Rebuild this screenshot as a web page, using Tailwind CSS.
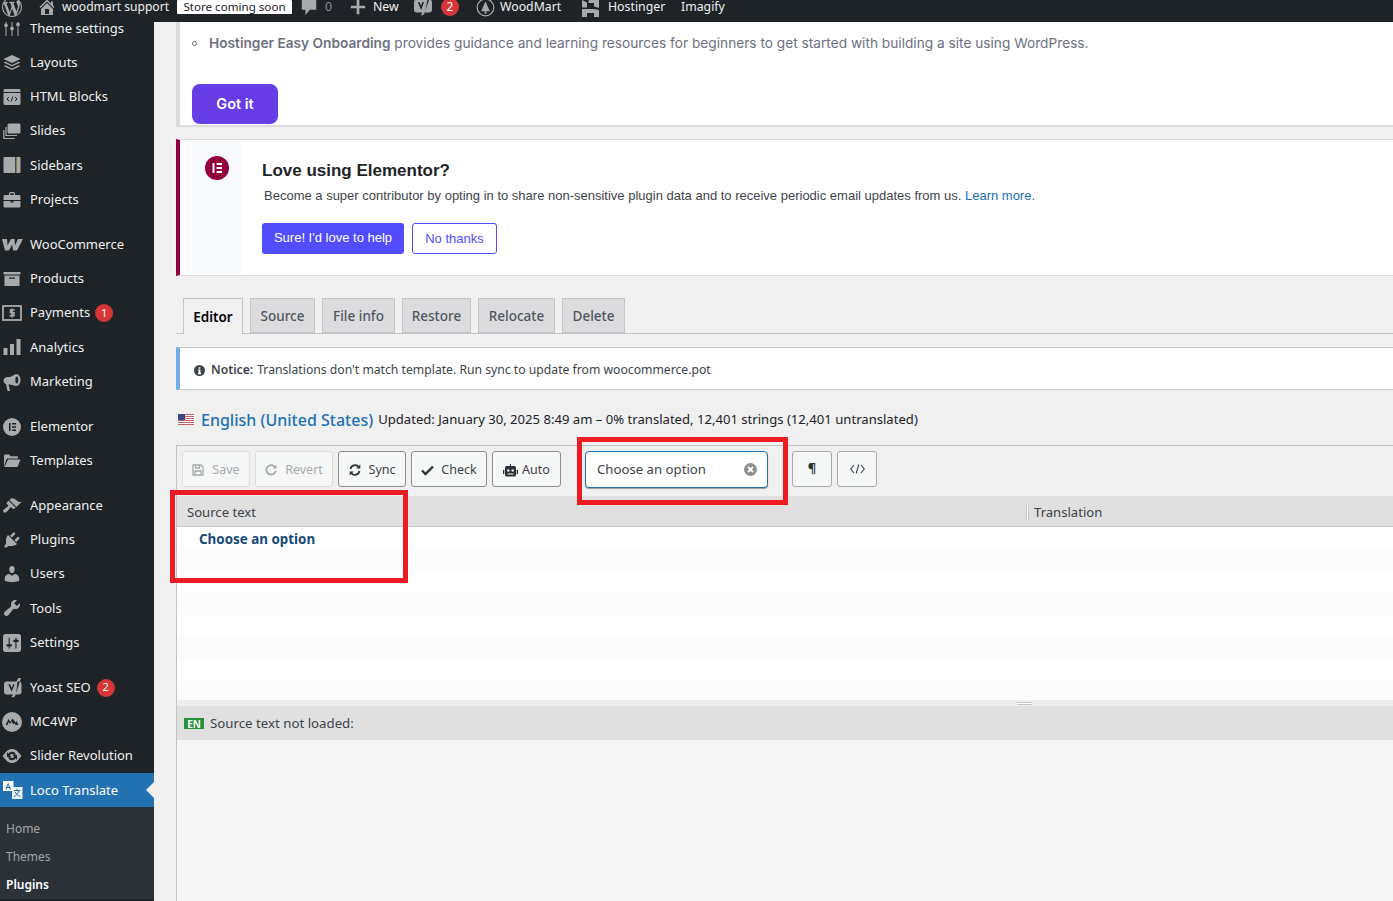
<!DOCTYPE html>
<html lang="en"><head><meta charset="utf-8"><title>Loco Translate</title>
<script src="https://cdn.jsdelivr.net/npm/@tailwindcss/browser@4"></script></head>
<body class="h-[901px] w-[1393px] overflow-hidden bg-[#f0f0f1] font-['Noto_Sans',sans-serif] text-[13.1px] text-[#3c434a]">
<header class="relative z-10 h-[22px] overflow-hidden bg-[#1d2327] text-[12.3px] leading-none text-[#f0f0f1]">
 <div class="-mt-[7px] flex h-[28px] items-center">
  <svg class="ml-[2px] h-[20px] w-[20px] shrink-0 text-[#a7aaad]" viewBox="0 0 20 20" fill="currentColor"><path d="M20 10c0-5.51-4.49-10-10-10C4.48 0 0 4.49 0 10c0 5.52 4.48 10 10 10 5.51 0 10-4.48 10-10zM7.78 15.37L4.37 6.22c.55-.02 1.17-.08 1.17-.08.5-.06.44-1.13-.06-1.11 0 0-1.45.11-2.37.11-.18 0-.37 0-.58-.01C4.12 2.69 6.87 1.11 10 1.11c2.33 0 4.45.87 6.05 2.34-.68-.11-1.65.39-1.65 1.58 0 .74.45 1.36.9 2.1.35.61.55 1.36.55 2.46 0 1.49-1.4 5-1.4 5l-3.03-8.37c.54-.02.82-.17.82-.17.5-.05.44-1.25-.06-1.22 0 0-1.44.12-2.38.12-.87 0-2.33-.12-2.33-.12-.5-.03-.56 1.2-.06 1.22l.92.08 1.26 3.41zM17.41 10c.24-.64.74-1.87.43-4.25.7 1.29 1.05 2.71 1.05 4.25 0 3.29-1.73 6.24-4.4 7.78.97-2.59 1.94-5.2 2.92-7.78zM6.1 18.09C3.12 16.65 1.11 13.53 1.11 10c0-1.3.23-2.48.72-3.59C3.25 10.3 4.67 14.2 6.1 18.09zm4.03-6.63l2.58 6.98c-.86.29-1.76.45-2.71.45-.79 0-1.57-.11-2.29-.33.81-2.38 1.62-4.74 2.42-7.1z"/></svg>
  <svg class="ml-[15px] h-[20px] w-[20px] shrink-0 text-[#a7aaad]" viewBox="0 0 20 20" fill="currentColor"><path d="M16 8.5l1.53 1.53-1.06 1.06L10 4.62l-6.47 6.47-1.06-1.06L10 2.5l4 4v-2h2v4zm-6-2.46l6 5.99V18H4v-5.97zM12 17v-5H8v5h4z"/></svg>
  <span class="ml-[5px] w-[108px] whitespace-nowrap text-[12.1px]">woodmart support</span>
  <span class="ml-[7px] flex h-[14px] w-[115px] shrink-0 items-center justify-center rounded-[1px] bg-white text-[11.6px] whitespace-nowrap text-[#1d2327]">Store coming soon</span>
  <svg class="ml-[8px] h-[18px] w-[18px] shrink-0 text-[#a7aaad]" viewBox="0 0 20 20" fill="currentColor"><path d="M2 1h16v12h-7l-5 6v-6H2z"/></svg>
  <span class="ml-[7px] w-[8px] text-[#8c8f94]">0</span>
  <svg class="ml-[16px] h-[18px] w-[18px] shrink-0 text-[#a7aaad]" viewBox="0 0 20 20" fill="currentColor"><path d="M18 8.500v3h-6.500V18h-3v-6.500H2v-3h6.500V2h3v6.500z"/></svg>
  <span class="ml-[6px] w-[26px]">New</span>
  <svg class="ml-[15px] h-[20px] w-[18px] shrink-0 text-[#a7aaad]" viewBox="0 0 18 20" fill="currentColor"><path d="M2.500 2.500h9L12.500 0H16l-5.500 16c-.5 1.500-1.500 2.300-3 2.500l-.5-1.500c1-.3 1.300-.7 1.500-1.500h-6C1.200 15.500 0 14.500 0 13V5c0-1.500 1.200-2.500 2.500-2.500zm1.300 2.700L7.200 13 10 5.200H8.200L7 9 5.700 5.200zM13.500 2.500H15c1.700 0 3 1 3 2.500v8c0 1.500-1.300 2.500-3 2.500h-4z" fill-rule="evenodd"/></svg>
  <span class="ml-[9px] flex h-[18px] w-[18px] shrink-0 items-center justify-center rounded-full bg-[#d63638] text-[12px] text-white">2</span>
  <svg class="ml-[17px] h-[19px] w-[19px] shrink-0 text-[#a7aaad]" viewBox="0 0 20 20" fill="none" stroke="currentColor" stroke-width="1.300"><circle cx="10" cy="10" r="8.800"/><path d="M10 3.500L14.500 14h-9z" fill="currentColor" stroke="none"/><path d="M9 14h2v2.500H9z" fill="currentColor" stroke="none"/></svg>
  <span class="ml-[5px] w-[63px]">WoodMart</span>
  <svg class="ml-[18px] h-[20px] w-[20px] shrink-0 text-[#a7aaad]" viewBox="0 0 20 20" fill="currentColor"><path d="M1 3l5 2.500v5H1zM1 12h12l5 1v8h-5v-5H6v5H1zM13 1l5-1.500V11l-5-1.500V6H7.500V3.500z"/></svg>
  <span class="ml-[7px] w-[56px]">Hostinger</span>
  <span class="ml-[17px]">Imagify</span>
 </div>
</header>
<div class="flex h-[879px]">
<aside class="h-full w-[154px] shrink-0 overflow-hidden bg-[#1d2327] text-[13px] text-[#f0f0f1]">
  <div class="-mt-[10.75px]">
    <a class="flex h-[34.25px] items-center"><svg class="ml-[3px] mr-[9px] h-[18px] w-[18px] shrink-0 text-[#a7aaad]" viewBox="0 0 18 18" fill="currentColor"><path d="M2.500 1h1v3.500a2 2 0 0 1 1.300 1.900 2 2 0 0 1-1.300 1.900V17h-1V8.300A2 2 0 0 1 1.200 6.400 2 2 0 0 1 2.500 4.500zM8.500 1h1v6.500a2 2 0 0 1 0 3.800V17h-1v-5.700a2 2 0 0 1 0-3.800zM14.500 1h1v2.500a2 2 0 0 1 0 3.800V17h-1V7.300a2 2 0 0 1 0-3.800z"/></svg>Theme settings</a>
    <a class="flex h-[34.25px] items-center"><svg class="ml-[3px] mr-[9px] h-[18px] w-[18px] shrink-0 text-[#a7aaad]" viewBox="0 0 18 18" fill="currentColor"><path d="M9 1l8.500 4-8.500 4-8.500-4zM2.500 7.700L9 11l6.500-3.300L17.500 8.500 9 12.500.5 8.500zM2.500 11.200L9 14.500l6.500-3.300L17.500 12 9 16 .5 12z"/></svg>Layouts</a>
    <a class="flex h-[34.25px] items-center"><svg class="ml-[3px] mr-[9px] h-[18px] w-[18px] shrink-0 text-[#a7aaad]" viewBox="0 0 18 18" fill="currentColor"><path d="M2 1h14a1.500 1.500 0 0 1 1.500 1.500V4H.5V2.500A1.500 1.500 0 0 1 2 1zM.5 5h17v10.500A1.500 1.500 0 0 1 16 17H2a1.500 1.500 0 0 1-1.500-1.500z"/><path d="M6 9l-2 2 2 2M12 9l2 2-2 2M10 8.500l-2 5" fill="none" stroke="#1d2327" stroke-width="1"/></svg>HTML Blocks</a>
    <a class="flex h-[34.25px] items-center"><svg class="ml-[3px] mr-[9px] h-[18px] w-[18px] shrink-0 text-[#a7aaad]" viewBox="0 0 18 18" fill="currentColor"><path d="M6 1.500h10A1.500 1.500 0 0 1 17.500 3v7A1.500 1.500 0 0 1 16 11.500H6A1.500 1.500 0 0 1 4.500 10V3A1.500 1.500 0 0 1 6 1.500z"/><path d="M3 5v8.500h11M.8 8v8.500h11" fill="none" stroke="currentColor" stroke-width="1.200"/></svg>Slides</a>
    <a class="flex h-[34.25px] items-center"><svg class="ml-[3px] mr-[9px] h-[18px] w-[18px] shrink-0 text-[#a7aaad]" viewBox="0 0 18 18" fill="currentColor"><path d="M1.500 1H12v16H1.500a1 1 0 0 1-1-1V2a1 1 0 0 1 1-1zM14 1h2.500a1 1 0 0 1 1 1v14a1 1 0 0 1-1 1H14z"/><path d="M12.500 1H14v16h-1.500z" fill="#8c7a3c"/></svg>Sidebars</a>
    <a class="flex h-[34.25px] items-center"><svg class="ml-[3px] mr-[9px] h-[18px] w-[18px] shrink-0 text-[#a7aaad]" viewBox="0 0 18 18" fill="currentColor"><path d="M6 4V2.500A1.500 1.500 0 0 1 7.500 1h3A1.500 1.500 0 0 1 12 2.500V4h4.500a1 1 0 0 1 1 1v4H.5V5a1 1 0 0 1 1-1zm1.300 0h3.400V2.300H7.300zM.5 10h7v1.500h3V10h7v5.500a1 1 0 0 1-1 1h-15a1 1 0 0 1-1-1z"/></svg>Projects</a>
    <div class="h-[10.7px]"></div>
    <a class="flex h-[34.25px] items-center"><svg class="ml-[2px] mr-[7px] h-[21px] w-[21px] shrink-0 text-[#a7aaad]" viewBox="0 0 21 21" fill="currentColor"><path d="M0 5h5l.5 6.500L9 5h3.500l.5 6.500L16 5h5l-6 11.500h-4l-.8-6-3.200 6H3z"/></svg>WooCommerce</a>
    <a class="flex h-[34.25px] items-center"><svg class="ml-[3px] mr-[9px] h-[18px] w-[18px] shrink-0 text-[#a7aaad]" viewBox="0 0 18 18" fill="currentColor"><path d="M.5 2h17v2.500H.5zM1.500 5.500h15V16h-15zM6 7.500v1.200h6V7.500z" fill-rule="evenodd"/></svg>Products</a>
    <a class="flex h-[34.25px] items-center"><svg class="ml-[2px] mr-[8px] h-[20px] w-[20px] shrink-0 text-[#a7aaad]" viewBox="0 0 20 20"><rect x="1" y="3" width="18" height="14" fill="none" stroke="currentColor" stroke-width="1.800"/><path d="M12.800 7h-4.300v2.800h3.500v3H7.500M10 5.500v9" fill="none" stroke="currentColor" stroke-width="1.600"/></svg>Payments<span class="ml-[5px] flex h-[18px] w-[18px] items-center justify-center rounded-full bg-[#d63638] text-[11px] text-white">1</span></a>
    <a class="flex h-[34.25px] items-center"><svg class="ml-[3px] mr-[9px] h-[18px] w-[18px] shrink-0 text-[#a7aaad]" viewBox="0 0 18 18" fill="currentColor"><path d="M.5 10h4v7h-4zM7 6h4v11H7zM13.500 1h4v16h-4z"/></svg>Analytics</a>
    <a class="flex h-[34.25px] items-center"><svg class="ml-[3px] mr-[7px] h-[20px] w-[20px] shrink-0 text-[#a7aaad]" viewBox="0 0 20 20" fill="currentColor"><path d="M13 2c3 0 4.500 3 4.500 6S16 14 13 14L7 12.500H5.500L7 19H4.500L3 12.200C1.500 11.500.5 10.200.5 8.500c0-2 2-3.500 4-3.500H7zm.8 2.500c-1 0-1.500 1.700-1.500 3.500s.5 3.500 1.500 3.500 1.500-1.700 1.500-3.500-.5-3.500-1.500-3.500z" fill-rule="evenodd"/></svg>Marketing</a>
    <div class="h-[10.7px]"></div>
    <a class="flex h-[34.25px] items-center"><svg class="ml-[3px] mr-[9px] h-[18px] w-[18px] shrink-0 text-[#a7aaad]" viewBox="0 0 18 18"><circle cx="9" cy="9" r="9" fill="currentColor"/><path d="M6 5h1.500v8H6zM9 5h4v1.500H9zM9 8.250h4v1.500H9zM9 11.500h4V13H9z" fill="#1d2327"/></svg>Elementor</a>
    <a class="flex h-[34.25px] items-center"><svg class="ml-[3px] mr-[9px] h-[18px] w-[18px] shrink-0 text-[#a7aaad]" viewBox="0 0 18 18" fill="currentColor"><path d="M1 15V3.500A1 1 0 0 1 2 2.500h4l1.500 1.800H14a1 1 0 0 1 1 1v1.200H5c-1 0-1.500.5-1.800 1.200z"/><path d="M5 7.500h12.500L14.500 15H1.500z"/></svg>Templates</a>
    <div class="h-[10.7px]"></div>
    <a class="flex h-[34.25px] items-center"><svg class="ml-[2px] mr-[8px] h-[20px] w-[20px] shrink-0 text-[#a7aaad]" viewBox="0 0 20 20" fill="currentColor"><path d="M14.480 11.060L7.410 3.990l1.500-1.500c.5-.56 2.300-.47 3.510.32 1.210.8 1.430 1.280 2.910 2.100 1.180.64 2.450 1.260 4.450.85zm-.710.710L6.700 4.700 4.930 6.470c-.39.39-.39 1.020 0 1.410l1.060 1.060c.39.39.39 1.030 0 1.420-.6.6-1.430 1.110-2.210 1.690-.35.26-.7.530-1.010.84C1.430 13.230.4 14.910 1.560 16.070c1.500 1.500 2.840.13 4.180-1.220.31-.31.58-.66.840-1.010.58-.78 1.090-1.610 1.690-2.210.39-.39 1.030-.39 1.420 0l1.060 1.060c.39.39 1.020.39 1.410 0z"/></svg>Appearance</a>
    <a class="flex h-[34.25px] items-center"><svg class="ml-[2px] mr-[8px] h-[20px] w-[20px] shrink-0 text-[#a7aaad]" viewBox="0 0 20 20" fill="currentColor"><path d="M13.110 4.360L9.870 7.600 8 5.730l3.240-3.240c.35-.34 1.050-.2 1.560.32.52.51.66 1.210.31 1.550zm-8 1.770l.91-1.120 9.010 9.010-1.190.84c-.71.71-2.630 1.160-3.820 1.160H6.140L4.900 17.260c-.59.590-1.540.590-2.120 0-.59-.58-.59-1.530 0-2.120l1.240-1.240v-3.880c0-1.130.4-3.190 1.090-3.890zm7.260 3.970l3.240-3.240c.34-.35 1.040-.21 1.550.31.520.51.660 1.210.31 1.550l-3.240 3.250z"/></svg>Plugins</a>
    <a class="flex h-[34.25px] items-center"><svg class="ml-[2px] mr-[8px] h-[20px] w-[20px] shrink-0 text-[#a7aaad]" viewBox="0 0 20 20" fill="currentColor"><path d="M10 9.250c-2.270 0-2.730-3.440-2.730-3.440C7 4.020 7.820 2 9.970 2c2.160 0 2.980 2.020 2.710 3.810 0 0-.41 3.440-2.680 3.440zm0 2.570L12.720 10c2.390 0 4.520 2.330 4.520 4.530v2.490s-3.650 1.130-7.240 1.130c-3.650 0-7.240-1.130-7.240-1.130v-2.490c0-2.250 1.940-4.480 4.470-4.480z"/></svg>Users</a>
    <a class="flex h-[34.25px] items-center"><svg class="ml-[2px] mr-[8px] h-[20px] w-[20px] shrink-0 text-[#a7aaad]" viewBox="0 0 20 20" fill="currentColor"><path d="M16.680 9.770c-1.340 1.340-3.300 1.670-4.950.99l-5.410 6.520c-.99.990-2.590.990-3.580 0s-.99-2.590 0-3.570l6.520-5.420c-.68-1.650-.35-3.610.99-4.950 1.280-1.280 3.120-1.620 4.720-1.060l-2.890 2.890 2.820 2.820 2.860-2.870c.53 1.580.18 3.390-1.080 4.650z"/></svg>Tools</a>
    <a class="flex h-[34.25px] items-center"><svg class="ml-[3px] mr-[9px] h-[18px] w-[18px] shrink-0 text-[#a7aaad]" viewBox="2 2 16 16" fill="currentColor"><path d="M18 16V4c0-1.100-.9-2-2-2H4c-1.100 0-2 .9-2 2v12c0 1.100.9 2 2 2h12c1.100 0 2-.9 2-2zM8 11h1c.55 0 1 .45 1 1s-.45 1-1 1H8v1.500c0 .28-.22.5-.5.5s-.5-.22-.5-.5V13H6c-.55 0-1-.45-1-1s.45-1 1-1h1V5.500c0-.28.22-.5.5-.5s.5.22.5.5V11zm5-2h-1c-.55 0-1-.45-1-1s.45-1 1-1h1V5.500c0-.28.22-.5.5-.5s.5.22.5.5V7h1c.55 0 1 .45 1 1s-.45 1-1 1h-1v5.500c0 .28-.22.5-.5.5s-.5-.22-.5-.5V9z"/></svg>Settings</a>
    <div class="h-[10.7px]"></div>
    <a class="flex h-[34.25px] items-center"><svg class="ml-[3px] mr-[7px] h-[20px] w-[20px] shrink-0 text-[#a7aaad]" viewBox="0 0 20 20" fill="currentColor"><path d="M3.500 3.500h9.800L15.500 0H18l-5.500 17c-.5 1.500-1.500 2.300-3 2.500L8.500 18c1-.3 1.500-.7 1.800-1.500H3.500C2 16.500 1 15.500 1 14V6c0-1.500 1-2.500 2.500-2.500zm1.800 2.700l3.400 7.600 2.800-7.600H10L8.700 10 7 6.200zM14.500 3.500h2c1 0 2 1 2 2.500v8c0 1.500-1 2.500-2.500 2.500h-3z" fill-rule="evenodd"/></svg>Yoast SEO<span class="ml-[6px] flex h-[18px] w-[18px] items-center justify-center rounded-full bg-[#d63638] text-[11px] text-white">2</span></a>
    <a class="flex h-[34.25px] items-center"><svg class="ml-[2px] mr-[8px] h-[20px] w-[20px] shrink-0 text-[#a7aaad]" viewBox="0 0 20 20"><circle cx="10" cy="10" r="10" fill="currentColor"/><path d="M3.500 13l3-6 2 3 2-3.500 3 4 1-1.500 2 4h-3l-1-2-1 1.500-2-3-1.500 2.500-1.500-2-1 3z" fill="#1d2327"/></svg>MC4WP</a>
    <a class="flex h-[34.25px] items-center"><svg class="ml-[2px] mr-[8px] h-[20px] w-[20px] shrink-0 text-[#a7aaad]" viewBox="0 0 20 20" fill="currentColor"><path d="M10 3c3 0 5.500 1.800 7 4l2.500 3L17 13c-1.500 2.200-4 4-7 4s-5.500-1.800-7-4L.5 10 3 7c1.500-2.200 4-4 7-4z"/><path d="M14 8.500a4.300 4.300 0 0 0-7.500-1L5 6.300V11h4.500L7.800 9.300A2.500 2.500 0 0 1 12 9zM6 11.500a4.300 4.300 0 0 0 7.500 1l1.500 1.200V9h-4.500l1.700 1.700A2.500 2.500 0 0 1 8 11z" fill="#1d2327"/></svg>Slider Revolution</a>
    <a class="relative flex h-[34px] items-center bg-[#2271b1] text-white"><svg class="ml-[2px] mr-[7px] h-[20px] w-[21px] shrink-0" viewBox="0 0 21 20"><path d="M1 1h10.500v10H1z" fill="#fff"/><path d="M6.200 2.500l3 7H8l-.6-1.500H5l-.6 1.500H3.200zm0 2.200L5.400 7h1.600z" fill="#2271b1" fill-rule="evenodd"/><path d="M10 7h10.500v12H10z" fill="#eef3f8"/><path d="M12 10.500h6.500M15.200 9v1.500M17 10.500c-.5 2.500-2.500 5-5 6M13.300 12c.7 2 2.700 3.700 5 4.500" fill="none" stroke="#2271b1" stroke-width="1"/></svg>Loco Translate<span class="absolute right-0 h-0 w-0 border-y-[8px] border-r-[8px] border-y-transparent border-r-[#f0f0f1]"></span></a>
    <div class="bg-[#2c3338] pt-[7.500px] text-[12px] text-[#c3c4c7]/80">
      <a class="flex h-[28px] items-center pl-[6px]">Home</a>
      <a class="flex h-[28px] items-center pl-[6px]">Themes</a>
      <a class="flex h-[28px] items-center pl-[6px] font-semibold text-white">Plugins</a>
    </div>
  </div>
</aside>
<main class="relative min-w-0 flex-1 overflow-hidden pl-[22px]">
  <section class="flex h-[105px] flex-col border-b-2 border-l-4 border-[#dcdcde] bg-white pl-[12px] font-['Inter',sans-serif] text-[13.7px] text-[#6d7081]">
    <p class="mt-[11px] flex items-center whitespace-nowrap"><span class="mr-[12px] h-[5px] w-[5px] rounded-full border border-[#6d7081]"></span><span><b class="font-semibold">Hostinger Easy Onboarding</b> provides guidance and learning resources for beginners to get started with building a site using WordPress.</span></p>
    <button class="mt-[30px] flex h-[40px] w-[86px] items-center justify-center rounded-[8px] bg-[#673de6] text-[14.500px] font-semibold text-white">Got it</button>
  </section>
  <section class="mt-[12px] flex h-[137px] border-y border-[#dcdcde] border-l-4 border-l-[#93003f] bg-white py-[1px] pl-[12px] font-['Liberation_Sans',sans-serif] text-[#3f444b]">
    <div class="flex w-[50px] shrink-0 justify-center bg-[#f9faff] pt-[15px]">
      <svg class="h-[24px] w-[24px]" viewBox="0 0 24 24"><circle cx="12" cy="12" r="12" fill="#93003f"/><path d="M7.500 7h2v10h-2zM11.500 7h5.500v2h-5.500zM11.500 11h5.500v2h-5.500zM11.500 15h5.500v2h-5.500z" fill="#fff"/></svg>
    </div>
    <div class="pl-[20px]">
      <h2 class="mt-[20px] text-[17px] font-bold leading-[20px] text-[#1d2327]">Love using Elementor?</h2>
      <p class="ml-[2px] mt-[7px] whitespace-nowrap text-[13px] leading-[16px]">Become a super contributor by opting in to share non-sensitive plugin data and to receive periodic email updates from us. <span class="text-[#2271b1]">Learn more.</span></p>
      <div class="mt-[19px] flex gap-[8px] text-[13px]">
        <button class="h-[31px] w-[142px] rounded-[3px] bg-[#524cff] pb-[1px] text-white">Sure! I'd love to help</button>
        <button class="h-[31px] w-[85px] rounded-[3px] border border-[#524cff] bg-white text-[#524cff]">No thanks</button>
      </div>
    </div>
  </section>
  <nav class="mt-[22px] flex h-[36px] gap-[7px] border-b border-[#c3c4c7] pl-[7px] text-[13.500px] text-[#50575e]">
    <a class="flex h-[36px] w-[60px] items-center justify-center border border-b-0 border-[#c3c4c7] bg-[#f0f0f1] pt-[1px] font-semibold text-black">Editor</a>
    <a class="flex h-[35px] w-[65px] items-center justify-center border border-[#c3c4c7] bg-[#dcdcde] pt-[1px] font-medium">Source</a>
    <a class="flex h-[35px] w-[73px] items-center justify-center border border-[#c3c4c7] bg-[#dcdcde] pt-[1px] font-medium">File info</a>
    <a class="flex h-[35px] w-[69px] items-center justify-center border border-[#c3c4c7] bg-[#dcdcde] pt-[1px] font-medium">Restore</a>
    <a class="flex h-[35px] w-[77px] items-center justify-center border border-[#c3c4c7] bg-[#dcdcde] pt-[1px] font-medium">Relocate</a>
    <a class="flex h-[35px] w-[63px] items-center justify-center border border-[#c3c4c7] bg-[#dcdcde] pt-[1px] font-medium">Delete</a>
  </nav>
  <div class="-mr-[10px] mt-[13px] flex h-[43px] items-center border border-l-4 border-[#c3c4c7] border-l-[#72aee6] bg-white pl-[14px] pt-[3px] text-[12.200px] whitespace-nowrap">
    <svg class="mr-[6px] h-[11px] w-[11px] shrink-0 text-[#3c434a]" viewBox="0 0 12 12"><circle cx="6" cy="6" r="6" fill="currentColor"/><path d="M5 2.500h2v1.600H5zM4.500 5h2.500v3.500h.7V10H4.300V8.500H5V6.300h-.5z" fill="#fff"/></svg>
    <b class="mr-[4px] font-semibold">Notice:</b> Translations don't match template. Run sync to update from woocommerce.pot
  </div>
  <div class="mt-[19px] flex h-[22px] items-center whitespace-nowrap">
    <svg class="ml-[2px] mr-[7px] -mt-[2px] h-[11px] w-[16px] shrink-0" viewBox="0 0 16 11"><path d="M0 0h16v11H0z" fill="#fff"/><path d="M0 0h16v1H0zM0 2h16v1H0zM0 4h16v1H0zM0 6h16v1H0zM0 8h16v1H0zM0 10h16v1H0z" fill="#c9606b"/><path d="M0 0h7v6H0z" fill="#3c4a80"/></svg>
    <span class="text-[16px] font-medium text-[#2271b1]">English (United States)</span>
    <span class="ml-[5px] text-[13.100px] text-[#1d2327]">Updated: January 30, 2025 8:49 am – 0% translated, 12,401 strings (12,401 untranslated)</span>
  </div>
  <div class="mt-[14px] flex h-[51px] gap-[5px] border-t border-l border-[#c3c4c7] pl-[5px] pt-[5px] text-[12.500px]">
    <button class="flex h-[36px] w-[68px] items-center justify-center gap-[8px] rounded-[3px] border border-[#dcdcde] bg-[#f6f7f7] pt-[2px] text-[#a7aaad]"><svg class="h-[12px] w-[12px]" viewBox="0 0 12 12" fill="none" stroke="currentColor" stroke-width="1.300"><path d="M1 1h8l2 2v8H1zM3.500 1v3h4V1M3 11V7h6v4"/></svg>Save</button>
    <button class="flex h-[36px] w-[78px] items-center justify-center gap-[8px] rounded-[3px] border border-[#dcdcde] bg-[#f6f7f7] pt-[2px] text-[#a7aaad]"><svg class="h-[12px] w-[12px]" viewBox="0 0 12 12" fill="none" stroke="currentColor" stroke-width="1.800"><path d="M10 3.200A4.700 4.700 0 1 0 10.800 6.500"/><path d="M11.500.8v3.800H7.700z" fill="currentColor" stroke="none"/></svg>Revert</button>
    <button class="flex h-[36px] w-[68px] items-center justify-center gap-[8px] rounded-[3px] border border-[#8c8f94] bg-[#f6f7f7] pt-[2px]"><svg class="h-[12px] w-[12px] text-[#2c3338]" viewBox="0 0 12 12" fill="none" stroke="currentColor" stroke-width="1.700"><path d="M1.500 5A4.600 4.600 0 0 1 9.700 3M10.500 7A4.600 4.600 0 0 1 2.300 9"/><path d="M11.300.5v4H7.300zM.7 11.500v-4h4z" fill="currentColor" stroke="none"/></svg>Sync</button>
    <button class="flex h-[36px] w-[76px] items-center justify-center gap-[7px] rounded-[3px] border border-[#8c8f94] bg-[#f6f7f7] pt-[2px]"><svg class="h-[12px] w-[13px] text-[#2c3338]" viewBox="0 0 13 12" fill="none" stroke="currentColor" stroke-width="2.400"><path d="M1 6.500l3.500 3.500L12 2.500"/></svg>Check</button>
    <button class="flex h-[36px] w-[69px] items-center justify-center gap-[4px] rounded-[3px] border border-[#8c8f94] bg-[#f6f7f7] pt-[2px]"><svg class="h-[13px] w-[15px] text-[#2c3338]" viewBox="0 0 15 13" fill="currentColor"><path d="M7 0h1v2h3.500A1.500 1.500 0 0 1 13 3.500V11a1.500 1.500 0 0 1-1.500 1.500h-8A1.500 1.500 0 0 1 2 11V3.500A1.500 1.500 0 0 1 3.500 2H7zM0 6h1.300v4H0zM13.700 6H15v4h-1.300z"/><circle cx="5.300" cy="6.500" r="1.200" fill="#f6f7f7"/><circle cx="9.700" cy="6.500" r="1.200" fill="#f6f7f7"/><path d="M4.500 9.500h6v1h-6z" fill="#f6f7f7"/></svg>Auto</button>
    <div class="ml-[19px] flex h-[37px] w-[183px] items-center justify-between rounded-[4px] border border-[#2271b1] bg-white pl-[11px] pr-[10px] text-[13.200px] shadow-[0_1px_1px_#999]">Choose an option
      <svg class="h-[13px] w-[13px] text-[#8c8f94]" viewBox="0 0 13 13"><circle cx="6.500" cy="6.500" r="6.500" fill="currentColor"/><path d="M4 4l5 5M9 4l-5 5" stroke="#fff" stroke-width="1.800"/></svg>
    </div>
    <button class="ml-[19px] flex h-[36px] w-[40px] items-center justify-center rounded-[3px] border border-[#a7aaad] bg-[#f6f7f7] text-[13px] font-bold text-[#2c3338]">¶</button>
    <button class="flex h-[36px] w-[40px] items-center justify-center rounded-[3px] border border-[#a7aaad] bg-[#f6f7f7]"><svg class="h-[10px] w-[15px] text-[#3c434a]" viewBox="0 0 15 10" fill="none" stroke="currentColor" stroke-width="1.100"><path d="M4 1L.8 5 4 9M11 1l3.200 4L11 9M8.800.5L6.200 9.500"/></svg></button>
  </div>
  <div class="border-l border-[#c3c4c7]">
    <div class="flex h-[31px] items-center border-b border-[#c3c4c7] bg-[#e0e0e0] pl-[10px] pt-[3px]"><span class="w-[836px]">Source text</span><span class="ml-[3px] mr-[5px] h-[15px] w-[3px] border-x border-[#c3c4c7] bg-white"></span><span>Translation</span></div>
    <div class="h-[23px] bg-white pl-[22px] text-[13.400px] font-bold leading-[24px] text-[#174a78]">Choose an option</div>
    <div class="h-[21px] bg-[#fcfcfc]"></div>
    <div class="h-[22px] bg-white"></div>
    <div class="h-[22px] bg-[#fcfcfc]"></div>
    <div class="h-[22px] bg-white"></div>
    <div class="h-[22px] bg-[#fcfcfc]"></div>
    <div class="h-[22px] bg-white"></div>
    <div class="h-[19px] bg-[#fcfcfc]"></div>
    <div class="flex h-[6px] items-center justify-end bg-[#eeeeee] pr-[361px]"><span class="h-[3px] w-[15px] border-y border-[#c3c4c7] bg-white"></span></div>
    <div class="flex h-[34px] items-center border-b border-[#dcdcde] bg-[#e0e0e0] pl-[7px] pt-[2px] text-[13.250px]"><span class="mr-[6px] flex h-[11px] w-[20px] items-center justify-center bg-[#2a8f3a] text-[10px] font-bold leading-none text-white">EN</span>Source text not loaded:</div>
    <div class="h-[161px] bg-[#f6f6f6]"></div>
  </div>
  <div class="absolute left-[16px] top-[468px] h-[93px] w-[238px] border-[5px] border-[#ed1c24]"></div>
  <div class="absolute left-[423px] top-[415px] h-[68px] w-[211px] border-[5px] border-[#ed1c24]"></div>
</main>
</div>
</body></html>
